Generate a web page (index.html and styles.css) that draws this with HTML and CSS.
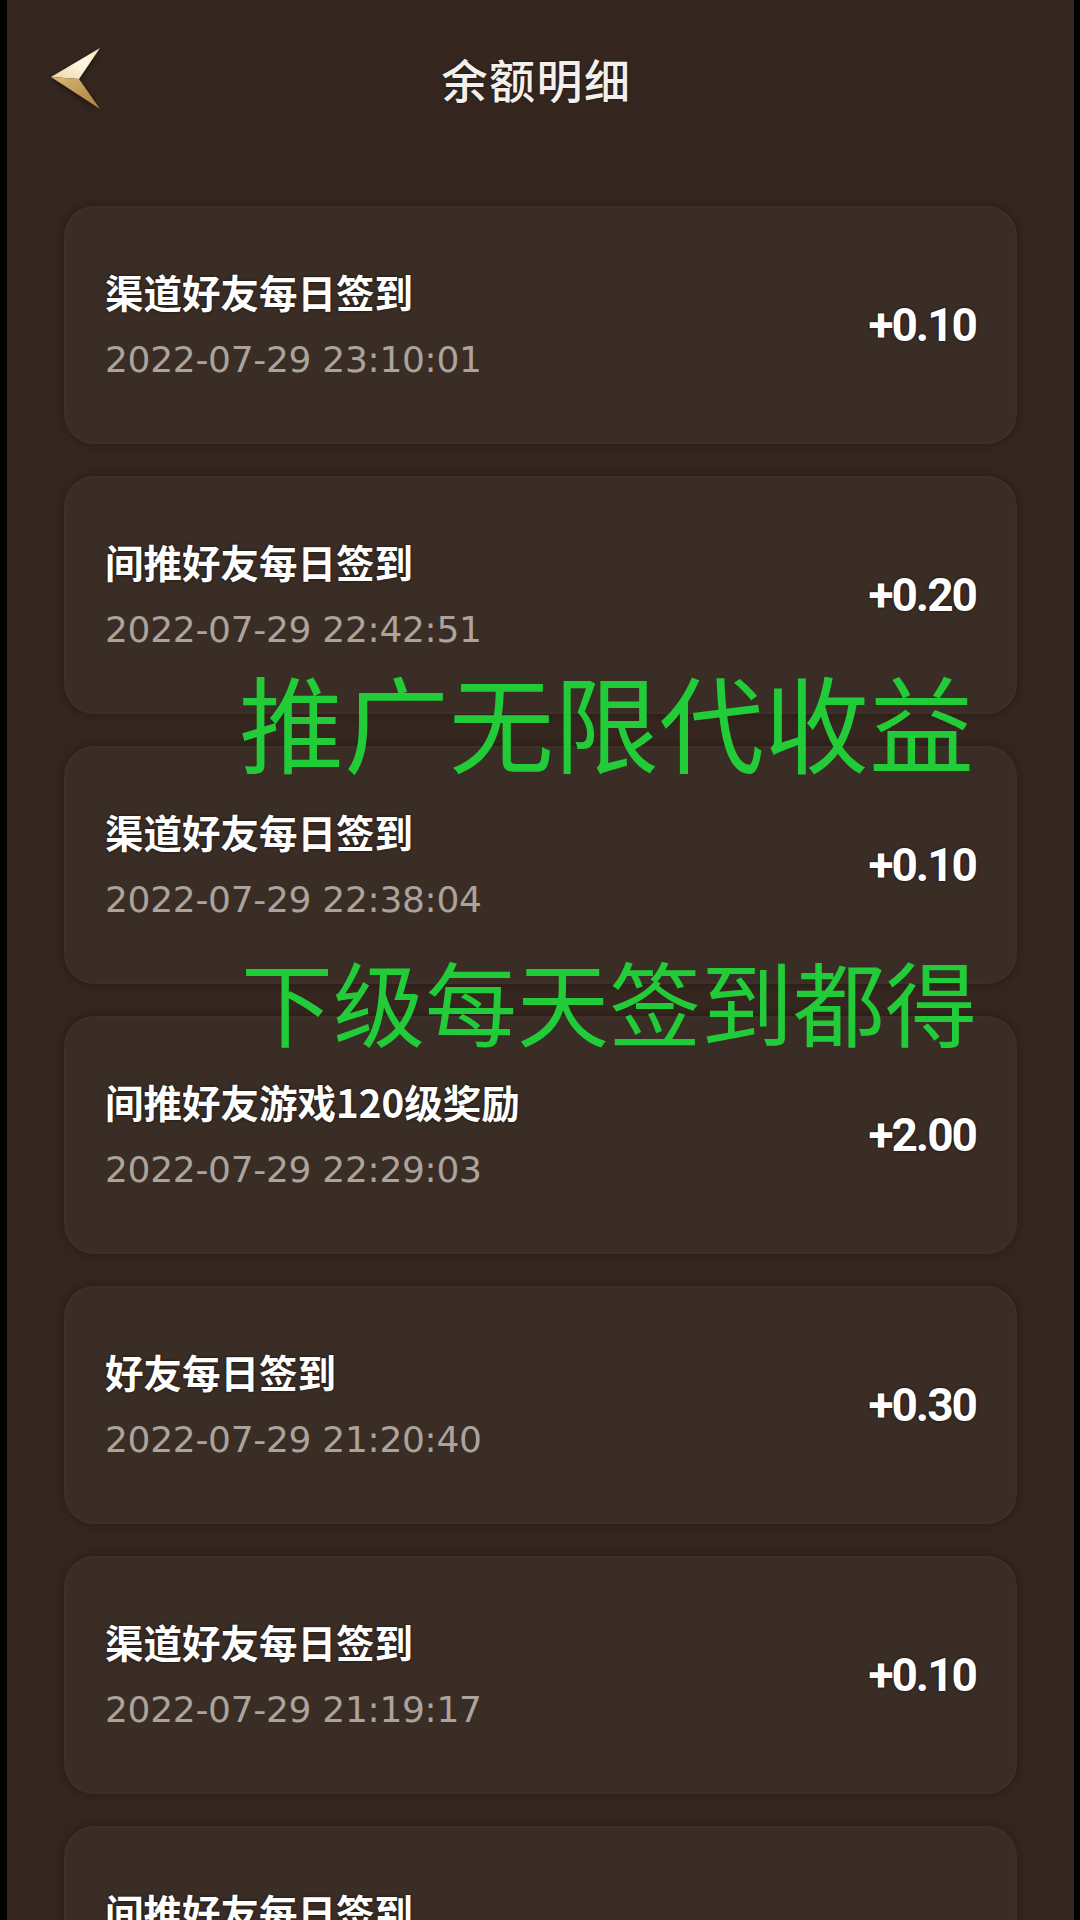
FILE: index.html
```html
<!DOCTYPE html>
<html lang="zh-CN">
<head>
<meta charset="utf-8">
<title>余额明细</title>
<link rel="stylesheet" href="styles.css">
</head>
<body>
<div class="screen">
  <header class="topbar">
    <a class="back" aria-label="返回">
      <svg width="56" height="66" viewBox="0 0 56 66">
        <defs>
          <linearGradient id="gUp" x1="0" y1="1" x2="1" y2="0">
            <stop offset="0" stop-color="#e9d6a4"/>
            <stop offset="0.6" stop-color="#fff8e4"/>
            <stop offset="1" stop-color="#f3e2b2"/>
          </linearGradient>
          <linearGradient id="gDown" x1="0" y1="0" x2="1" y2="1">
            <stop offset="0" stop-color="#d9b877"/>
            <stop offset="1" stop-color="#a9803c"/>
          </linearGradient>
        </defs>
        <polygon points="2,31 51,2 30,33" fill="url(#gUp)"/>
        <polygon points="2,31 30,33 51,63" fill="url(#gDown)"/>
      </svg>
    </a>
    <h1 class="title">余额明细</h1>
    <span></span>
  </header>

  <main class="list">
    <div class="card">
      <div class="info"><div class="name">渠道好友每日签到</div><div class="time">2022-07-29 23:10:01</div></div>
      <div class="amount">+0.10</div>
    </div>
    <div class="card">
      <div class="info"><div class="name">间推好友每日签到</div><div class="time">2022-07-29 22:42:51</div></div>
      <div class="amount">+0.20</div>
    </div>
    <div class="card">
      <div class="info"><div class="name">渠道好友每日签到</div><div class="time">2022-07-29 22:38:04</div></div>
      <div class="amount">+0.10</div>
    </div>
    <div class="card">
      <div class="info"><div class="name">间推好友游戏120级奖励</div><div class="time">2022-07-29 22:29:03</div></div>
      <div class="amount">+2.00</div>
    </div>
    <div class="card">
      <div class="info"><div class="name">好友每日签到</div><div class="time">2022-07-29 21:20:40</div></div>
      <div class="amount">+0.30</div>
    </div>
    <div class="card">
      <div class="info"><div class="name">渠道好友每日签到</div><div class="time">2022-07-29 21:19:17</div></div>
      <div class="amount">+0.10</div>
    </div>
    <div class="card">
      <div class="info"><div class="name">间推好友每日签到</div><div class="time">2022-07-29 21:05:12</div></div>
      <div class="amount">+0.20</div>
    </div>
  </main>

  <div class="promo promo-1">推广无限代收益</div>
  <div class="promo promo-2">下级每天签到都得</div>
</div>
</body>
</html>
```

FILE: styles.css
```css
html, body {
  margin: 0;
  padding: 0;
}
body {
  background: #000;
  width: 1080px;
  height: 1920px;
  overflow: hidden;
  padding: 0 6px 0 7px;
  box-sizing: border-box;
  font-family: "Noto Sans CJK SC", "Noto Sans", sans-serif;
}
.screen {
  position: relative;
  height: 1920px;
  background: #35271f;
  overflow: hidden;
}
.topbar {
  height: 162px;
  display: grid;
  grid-template-columns: 1fr auto 1fr;
  align-items: center;
  padding: 0 50px 0 42px;
}
.back {
  justify-self: start;
  display: block;
  margin-top: -4px;
  filter: drop-shadow(0 2px 3px rgba(0,0,0,0.5));
}
.back svg { display: block; }
.title {
  margin: 0 0 6px 0;
  font-size: 46px;
  font-weight: 500;
  color: #f3efea;
  letter-spacing: 1.5px;
  text-shadow: 0 0 3px rgba(0,0,0,0.6);
}
.list {
  padding: 44px 57px 0 57px;
  display: flex;
  flex-direction: column;
  gap: 32px;
}
.card {
  height: 238px;
  box-sizing: border-box;
  border-radius: 30px;
  background: #3a2d25;
  box-shadow: 0 0 10px rgba(20,12,8,0.45), inset 0 0 0 2px rgba(255,255,255,0.015);
  display: flex;
  align-items: center;
  justify-content: space-between;
  padding: 0 41px;
}
.info {
  display: flex;
  flex-direction: column;
  gap: 23px;
}
.name {
  font-size: 38.5px;
  line-height: 46px;
  font-weight: 700;
  color: #ffffff;
  text-shadow: 0 0 3px rgba(0,0,0,0.7);
}
.time {
  font-family: "DejaVu Sans", "Noto Sans", sans-serif;
  font-size: 36px;
  line-height: 46px;
  color: #aba39c;
  letter-spacing: -0.3px;
}
.amount {
  font-family: Roboto, "Noto Sans", sans-serif;
  font-size: 46px;
  font-weight: 700;
  letter-spacing: -2px;
  color: #ffffff;
  text-shadow: 0 0 3px rgba(0,0,0,0.7);
}
.promo {
  position: absolute;
  font-family: "Noto Sans CJK SC", sans-serif;
  font-weight: 400;
  color: #22cb38;
  line-height: 1;
  white-space: nowrap;
}
.promo-1 {
  left: 232px;
  top: 667px;
  font-size: 105px;
}
.promo-2 {
  left: 234px;
  top: 954px;
  font-size: 92px;
}
```
